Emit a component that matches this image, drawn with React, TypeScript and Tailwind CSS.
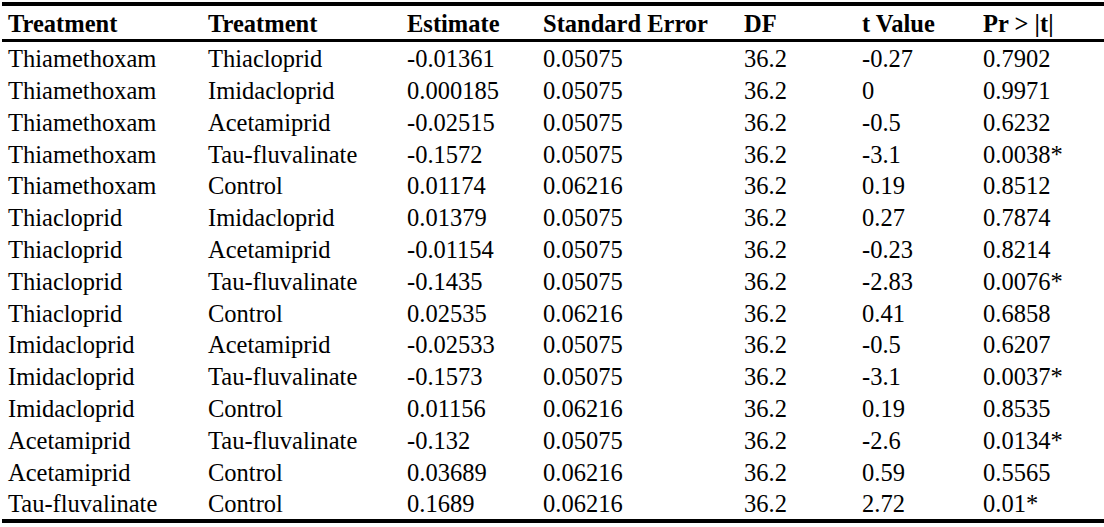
const rows: string[][] = [
  ["Thiamethoxam", "Thiacloprid", "-0.01361", "0.05075", "36.2", "-0.27", "0.7902"],
  ["Thiamethoxam", "Imidacloprid", "0.000185", "0.05075", "36.2", "0", "0.9971"],
  ["Thiamethoxam", "Acetamiprid", "-0.02515", "0.05075", "36.2", "-0.5", "0.6232"],
  ["Thiamethoxam", "Tau-fluvalinate", "-0.1572", "0.05075", "36.2", "-3.1", "0.0038*"],
  ["Thiamethoxam", "Control", "0.01174", "0.06216", "36.2", "0.19", "0.8512"],
  ["Thiacloprid", "Imidacloprid", "0.01379", "0.05075", "36.2", "0.27", "0.7874"],
  ["Thiacloprid", "Acetamiprid", "-0.01154", "0.05075", "36.2", "-0.23", "0.8214"],
  ["Thiacloprid", "Tau-fluvalinate", "-0.1435", "0.05075", "36.2", "-2.83", "0.0076*"],
  ["Thiacloprid", "Control", "0.02535", "0.06216", "36.2", "0.41", "0.6858"],
  ["Imidacloprid", "Acetamiprid", "-0.02533", "0.05075", "36.2", "-0.5", "0.6207"],
  ["Imidacloprid", "Tau-fluvalinate", "-0.1573", "0.05075", "36.2", "-3.1", "0.0037*"],
  ["Imidacloprid", "Control", "0.01156", "0.06216", "36.2", "0.19", "0.8535"],
  ["Acetamiprid", "Tau-fluvalinate", "-0.132", "0.05075", "36.2", "-2.6", "0.0134*"],
  ["Acetamiprid", "Control", "0.03689", "0.06216", "36.2", "0.59", "0.5565"],
  ["Tau-fluvalinate", "Control", "0.1689", "0.06216", "36.2", "2.72", "0.01*"],
];

const headers = ["Treatment", "Treatment", "Estimate", "Standard Error", "DF", "t Value", "Pr > |t|"];

const cols = "grid grid-cols-[200px_199px_136px_201px_118px_121px_1fr] pl-[6px] items-center";

export default function App() {
  return (
    <div
      className="min-h-screen bg-white text-black pt-[2px] pl-[2px] text-[24.5px] leading-none"
      style={{ fontFamily: '"Liberation Serif", "Times New Roman", serif' }}
    >
      <div className="border-t-4 border-b-4 border-black">
        <div className={`${cols} h-[36px] pt-[3px] font-bold border-b-[3px] border-black`}>
          {headers.map((h, i) => (
            <div key={i} className="whitespace-nowrap">{h}</div>
          ))}
        </div>
        {rows.map((r, i) => (
          <div key={i} className={`${cols} h-[31.8px] pt-[3px]`}>
            {r.map((c, j) => (
              <div key={j} className="whitespace-nowrap">{c}</div>
            ))}
          </div>
        ))}
      </div>
    </div>
  );
}
